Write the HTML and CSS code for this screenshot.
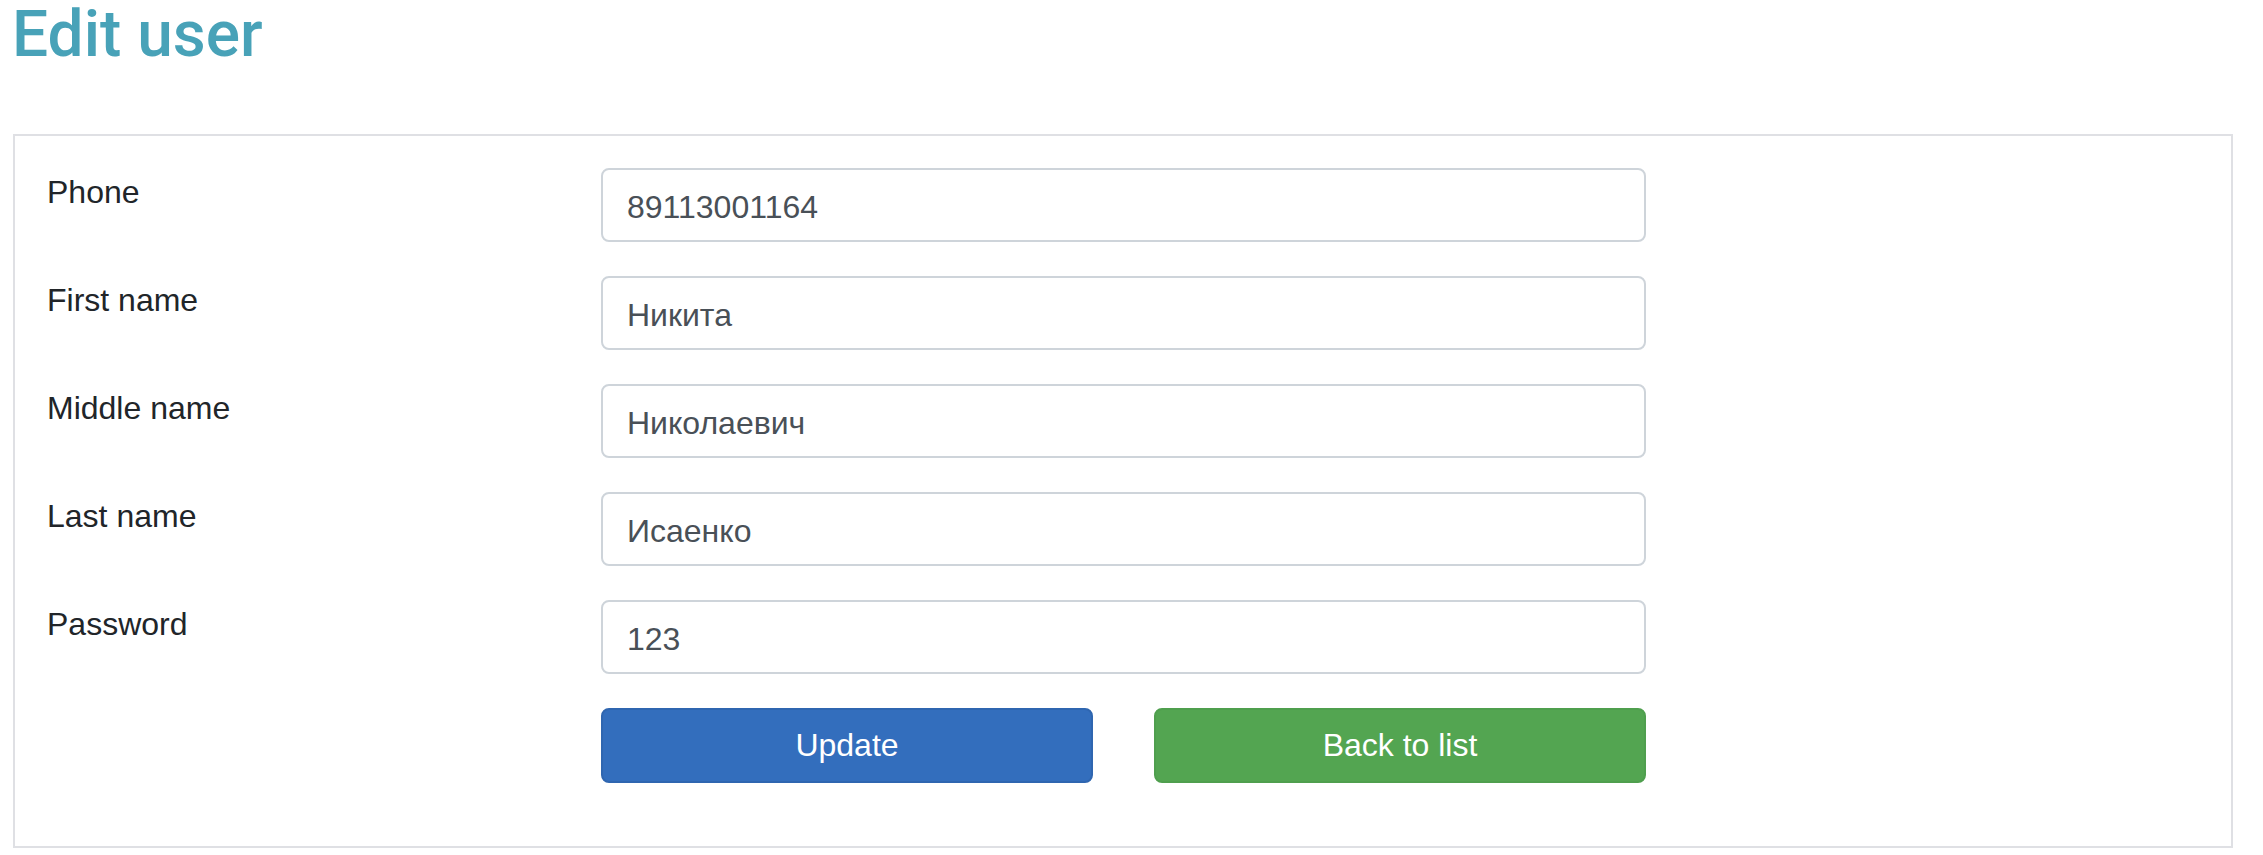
FILE: index.html
```html
<!DOCTYPE html>
<html lang="en">
<head>
<meta charset="utf-8">
<title>Edit user</title>
<link rel="stylesheet" href="styles.css">
</head>
<body>
<h2 class="page-title">Edit user</h2>
<div class="panel">
  <form class="user-form">
    <label class="form-label" for="phone">Phone</label>
    <input class="form-input" id="phone" type="text" value="89113001164">
    <label class="form-label" for="first">First name</label>
    <input class="form-input" id="first" type="text" value="Никита">
    <label class="form-label" for="middle">Middle name</label>
    <input class="form-input" id="middle" type="text" value="Николаевич">
    <label class="form-label" for="last">Last name</label>
    <input class="form-input" id="last" type="text" value="Исаенко">
    <label class="form-label" for="password">Password</label>
    <input class="form-input" id="password" type="text" value="123">
    <div class="spacer"></div>
    <div class="actions">
      <button type="submit" class="btn btn-blue">Update</button>
      <button type="button" class="btn btn-green">Back to list</button>
    </div>
  </form>
</div>
</body>
</html>
```
FILE: styles.css
```css
html, body {
  margin: 0;
  padding: 0;
  background: #ffffff;
}

body {
  font-family: "Liberation Sans", Arial, sans-serif;
  color: #212529;
}

.page-title {
  margin: 0 0 64px 0;
  padding-left: 12px;
  font-family: Roboto, "Liberation Sans", Arial, sans-serif;
  font-size: 64px;
  line-height: 70px;
  font-weight: 500;
  color: #48a2b8;
}

.panel {
  margin-left: 13px;
  width: 2220px;
  box-sizing: border-box;
  border: 2px solid #dfe0e4;
  padding: 32px 30px 64px;
}

.user-form {
  display: grid;
  grid-template-columns: 556px 1045px;
  grid-auto-rows: 74px;
  row-gap: 34px;
  margin: 0;
}

.form-label {
  padding-left: 2px;
  font-size: 32px;
  line-height: 48px;
  color: #212529;
}

.form-input {
  box-sizing: border-box;
  width: 100%;
  height: 74px;
  margin: 0;
  padding: 4px 24px 0;
  border: 2px solid #ced4da;
  border-radius: 8px;
  background: #ffffff;
  font-family: "Liberation Sans", Arial, sans-serif;
  font-size: 32px;
  color: #495057;
  outline: none;
}

.actions {
  display: grid;
  grid-template-columns: 1fr 1fr;
  column-gap: 61px;
  height: 75px;
}

.btn {
  box-sizing: border-box;
  height: 75px;
  margin: 0;
  padding: 0;
  border-radius: 8px;
  font-family: "Liberation Sans", Arial, sans-serif;
  font-size: 32px;
  color: #ffffff;
  cursor: pointer;
}

.btn-blue {
  background: #336ebd;
  border: 2px solid #2f66b0;
}

.btn-green {
  background: #53a551;
  border: 2px solid #4f9f4e;
}
```
